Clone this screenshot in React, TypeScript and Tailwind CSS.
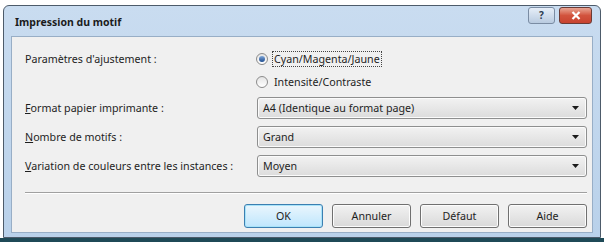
import React from "react";

const font = { fontFamily: '"Noto Sans", "Open Sans", sans-serif' };

const Select = ({ value }: { value: string }) => (
  <div className="flex h-[22px] w-[330px] shrink-0 items-center justify-between rounded-[3px] border border-[#8e8f8f] bg-gradient-to-b from-[#f2f2f2] to-[#dcdcdc] pl-[5px] pr-[7px] text-[#1e1e1e] shadow-[inset_0_0_0_1px_#fbfbfb]">
    <span>{value}</span>
    <svg width="7" height="4" viewBox="0 0 7 4">
      <path d="M0 0h7L3.5 4z" fill="#1a1a1a" />
    </svg>
  </div>
);

const Radio = ({ checked, label }: { checked?: boolean; label: string }) => (
  <div className="flex items-center gap-[4px]">
    <div className="flex h-[12px] w-[12px] items-center justify-center rounded-full border border-[#8b8b8b] bg-gradient-to-b from-[#e4e4e4] to-[#ffffff]">
      {checked && (
        <div className="h-[6px] w-[6px] rounded-full bg-gradient-to-b from-[#7fa6d8] to-[#1c4c8f]" />
      )}
    </div>
    <span
      className={
        checked
          ? "border border-dotted border-[#444] px-[1px] leading-[14px]"
          : "px-[2px] leading-[14px]"
      }
    >
      {label}
    </span>
  </div>
);

const Btn = ({ label, focus }: { label: string; focus?: boolean }) => (
  <div
    className={
      "flex h-[24px] w-[79px] items-center justify-center rounded-[3px] border text-[#1e1e1e] " +
      (focus
        ? "border-[#3c7fb1] bg-gradient-to-b from-[#eaf6fd] to-[#bee6fd] shadow-[inset_0_0_0_1px_#a8e3f9]"
        : "border-[#707070] bg-gradient-to-b from-[#f2f2f2] to-[#d9d9d9] shadow-[inset_0_0_0_1px_#fcfcfc]")
    }
  >
    {label}
  </div>
);

const App = () => {
  return (
    <div className="h-[242px] w-[604px] overflow-hidden bg-white" style={font}>
      <div className="ml-[3px] mt-[5px] flex h-[233px] w-[598px] flex-col rounded-t-[6px] border border-[#4d5b6a] bg-gradient-to-b from-[#c9dcf0] to-[#b9d1ea]">
        {/* title bar */}
        <div className="flex h-[30px] items-start justify-between pl-[11px] pr-[8px]">
          <span className="mt-[9px] text-[10.5px] font-bold text-[#1b1b1b]">Impression du motif</span>
          <div className="mt-[1px] flex items-center gap-[4px]">
            <div className="flex h-[17px] w-[27px] items-center justify-center rounded-[3px] border border-[#7a8ca3] bg-gradient-to-b from-[#e6eef8] to-[#b9cbe0] text-[10px] font-bold text-[#2a3a50]">
              ?
            </div>
            <div className="flex h-[17px] w-[33px] items-center justify-center rounded-[3px] border border-[#6b3b35] bg-gradient-to-b from-[#e8a493] via-[#d2533d] to-[#c84330]">
              <svg width="10" height="9" viewBox="0 0 10 9">
                <path d="M1.5 1l7 7M8.5 1l-7 7" stroke="#fff" strokeWidth="2.2" />
              </svg>
            </div>
          </div>
        </div>
        {/* content */}
        <div className="mx-[7px] flex flex-1 flex-col border border-[#98aec6] bg-[#f0f0f0] pl-[13px] pr-[5px] pt-[13px] text-[10.7px] text-[#1e1e1e]">
          <div className="flex">
            <div className="w-[231px] shrink-0 pt-[1px]">Paramètres d'ajustement :</div>
            <div className="flex flex-col gap-[8px] pt-[1px]">
              <Radio checked label="Cyan/Magenta/Jaune" />
              <Radio label="Intensité/Contraste" />
            </div>
          </div>
          <div className="mt-[8px] flex items-center">
            <div className="w-[232px] shrink-0">
              <u>F</u>ormat papier imprimante :
            </div>
            <Select value="A4 (Identique au format page)" />
          </div>
          <div className="mt-[7px] flex items-center">
            <div className="w-[232px] shrink-0">
              <u>N</u>ombre de motifs :
            </div>
            <Select value="Grand" />
          </div>
          <div className="mt-[7px] flex items-center">
            <div className="w-[232px] shrink-0">
              <u>V</u>ariation de couleurs entre les instances :
            </div>
            <Select value="Moyen" />
          </div>
          <div className="mt-[15px] h-[2px] border-t border-b border-t-[#a0a0a0] border-b-white" />
          <div className="mt-[10px] flex justify-end gap-[9px]">
            <Btn label="OK" focus />
            <Btn label="Annuler" />
            <Btn label="Défaut" />
            <Btn label="Aide" />
          </div>
        </div>
        <div className="h-[4px]" />
      </div>
      <div className="h-[4px] bg-[#1f4a57]" />
    </div>
  );
};

export default App;
